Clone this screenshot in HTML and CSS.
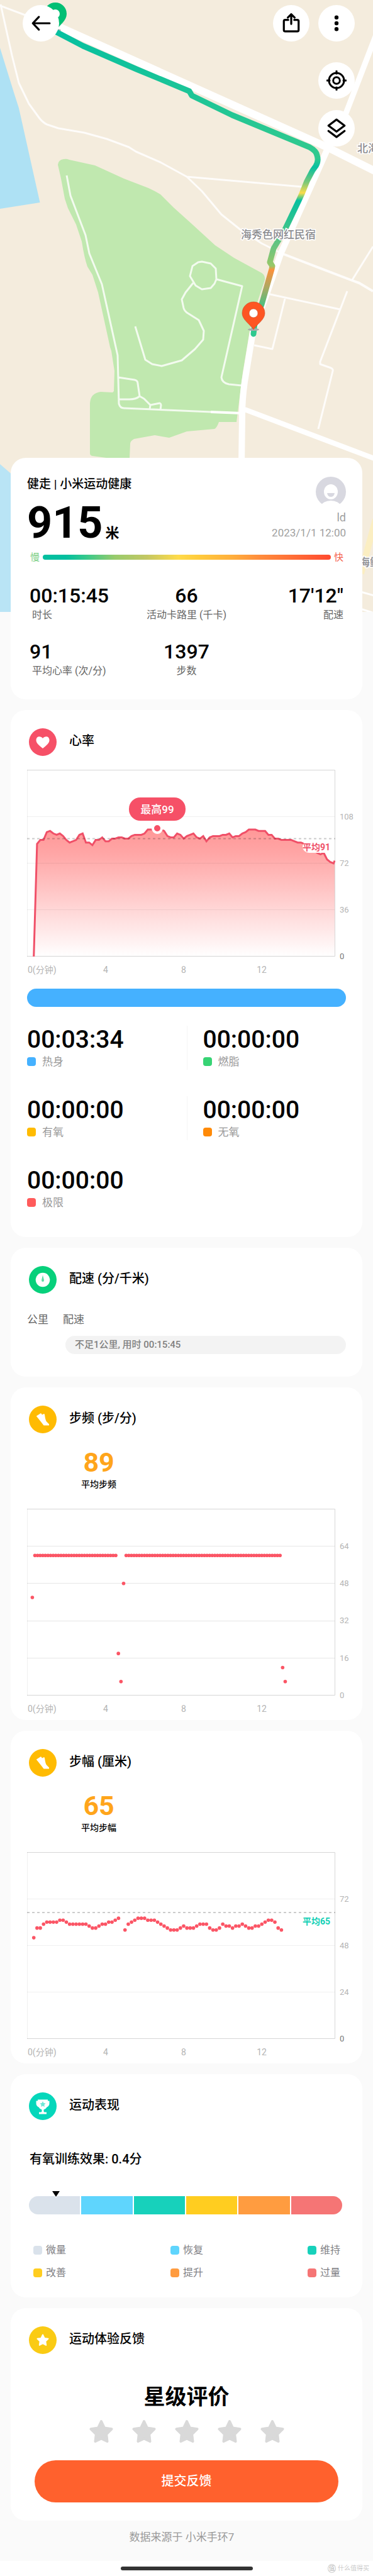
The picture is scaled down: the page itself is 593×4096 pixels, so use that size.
FILE: index.html
```html
<!DOCTYPE html>
<html lang="zh-CN">
<head>
  <meta charset="UTF-8">
  <meta name="viewport" content="width=device-width, initial-scale=1.0">
  <title>健走 | 小米运动健康</title>
  <link rel="stylesheet" href="styles.css">
</head>
<body>
  <svg class="map" viewBox="0 0 593 973" preserveAspectRatio="xMidYMin slice" aria-hidden="true">
    <defs>
      <linearGradient id="pace" gradientUnits="userSpaceOnUse" x1="0" y1="50" x2="0" y2="530">
        <stop offset="0" stop-color="#06c0a0"/>
        <stop offset=".38" stop-color="#2fc98f"/>
        <stop offset=".42" stop-color="#2fc98f"/>
        <stop offset=".45" stop-color="#06c0a0"/>
        <stop offset=".5" stop-color="#7cc878"/>
        <stop offset=".535" stop-color="#fbdc4a"/>
        <stop offset=".56" stop-color="#06c0a0"/>
        <stop offset=".64" stop-color="#35c38c"/>
        <stop offset=".72" stop-color="#70c47c"/>
        <stop offset=".777" stop-color="#98c868"/>
        <stop offset=".79" stop-color="#fb913c"/>
        <stop offset=".845" stop-color="#b0a860"/>
        <stop offset=".9" stop-color="#58bd7c"/>
        <stop offset="1" stop-color="#2fc98f"/>
      </linearGradient>
    </defs>
    <rect width="593" height="973" fill="#f4ecdd"/>
    <!-- water -->
    <path fill="#aee1f4" d="M0 76 22 147 30 172 63.500 322 0 332z"/>
    <path fill="#b9e4f5" d="M0 738 60 790V973H0z"/>
    <!-- park -->
    <path fill="#c0e8af" d="M92 262Q93 254 101 253Q106 252 110 254L151 263 197 284 236 299Q247 304 255 309L276 330 306 357 342 390 372 410 416 434Q422 438 421 445L408 484 397 526 386 592 376 671 348 671Q345 680 341 682L297 686 269 696 246 692 213 698Q207 701 207 706L206 728H169L147 725Q143 724 143 721L143 641Q144 625 160 623L179 624 181 622 182 590 177 558 175 552 156 465 147 437 139 424Q134 410 130 384L121 357 108 331 103 316 97 284z"/>
    <!-- roads -->
    <g fill="none" stroke="#fff" stroke-linejoin="round">
      <path stroke-width="12" d="M88 40 520 234 598 273"/>
      <path stroke-width="9" d="M600 50 550 180 522 236"/>
      <path stroke-width="10" d="M521 236 467 357 446 404 424 467 402 528 389 607Q385 635 385 660L384 740"/>
      <path stroke-width="8" d="M389 651 600 731"/>
      <path stroke-width="3" opacity=".85" d="M0 9 40 24M1 7 19 88 30 132 46 165 62 187Q68 195 75 198L93 204 134 211 170 221 205 234 216 241 255 258 297 281 321 304 352 341 382 365 416 387 444 401M297 281 480 297M593 392 560 445M425 467 541 492M552 463 509 575 509 579 526 585Q530 587 529 590L506 682M453 475 433 555 404 549"/>
      <path stroke-width="4" opacity=".85" d="M448 403 560 446 571 450 593 463"/>
      <path stroke-width="3" opacity=".8" d="M106 279 112 311 136 374 142 403 162 452 187 565 189 642Q191 649 197 649L335 655M188 600 214 604Q219 605 219 610L222 630Q216 635 206 635H189M222 630 229 634 239 644 238 651M239 644 254 641Q256 642 256 644L255 652M215 519 231 572 242 579 257 582 289 573 310 555 323 540 324 526 316 509 297 497Q293 494 292 490L289 476 295 465 307 450M321 416 335 419 343 427 344 444 341 451 335 458 321 460 311 454 302 439 306 423 315 417zM344 444 385 455 352 600Q353 609 364 611L384 613"/>
      <path stroke-width="4" d="M335 655 384 657"/>
      <path stroke-width="3" d="M570 940 595 947M570 967 595 975"/>
      <path stroke="#fbeec2" stroke-width="10" d="M597 826 574 912"/>
    </g>
    <!-- start marker -->
    <path fill="#02bf74" d="M88 50C80 38 70 33 70 22A18 18 0 0 1 106 22C106 33 96 38 88 50z"/>
    <ellipse cx="90" cy="48" rx="7" ry="2" fill="#b8b8b8"/>
    <circle cx="88" cy="22" r="7" fill="#fff"/>
    <!-- route -->
    <path fill="none" stroke="url(#pace)" stroke-width="9" stroke-linecap="round" stroke-linejoin="round" d="M88 50 132 73 217 110 301 145 305 152 369 183 492 234Q503 240 504 247 507 256 502 264L497 271 488 288 480 308 475 319 453 365 435 395 429 417 433 423 432 428 416 484 405 514 403 531"/>
    <!-- finish marker -->
    <ellipse cx="403" cy="524" rx="9" ry="2" fill="#aaa"/>
    <path fill="#fd5523" stroke="#c94a25" stroke-width=".6" d="M403 524C396 514 385 508 385 498A18 18 0 0 1 421 498C421 508 410 514 403 524z"/>
    <circle cx="403" cy="498" r="7" fill="#fff" stroke="#c94a25" stroke-width=".6"/>
    <g class="place">
      <text x="383" y="379">海秀色网红民宿</text>
      <text x="568" y="242">北海</text>
      <text x="571" y="900">海鲜</text>
    </g>
  </svg>

  <header class="controls">
    <div class="bar">
      <button class="round" aria-label="返回">
        <svg viewBox="0 0 30 30"><path d="M28 15H4M12 5.500 3 15l9 9.500"/></svg>
      </button>
      <div class="actions">
        <button class="round" aria-label="分享">
          <svg viewBox="0 0 30 30"><path d="M10.500 10H6q-2 0-2 2v13q0 2 2 2h18q2 0 2-2V12q0-2-2-2h-4.500M15 16V2M10 6.500 15 1.500l5 5"/></svg>
        </button>
        <button class="round" aria-label="更多">
          <svg viewBox="0 0 30 30"><g fill="#000" stroke="none"><circle cx="15" cy="6.300" r="3"/><circle cx="15" cy="15" r="3"/><circle cx="15" cy="23.700" r="3"/></g></svg>
        </button>
      </div>
    </div>
    <button class="round" aria-label="定位">
      <svg viewBox="-1 -1 32 32"><circle cx="15" cy="15" r="12"/><circle cx="15" cy="15" r="5.300"/><path d="M15 0v4M15 26v4M0 15h4M26 15h4"/></svg>
    </button>
    <button class="round" aria-label="图层">
      <svg viewBox="0 0 30 30"><path d="M15 2 27 11 15 20 3 11zM3 19l12 9 12-9"/></svg>
    </button>
  </header>

  <main class="cards">
    <section class="card summary">
      <div class="top">
        <div>
          <h1>健走 | 小米运动健康</h1>
          <p class="distance">915<small>米</small></p>
        </div>
        <div class="user">
          <svg class="avatar" viewBox="0 0 48 48" aria-hidden="true">
            <circle cx="24" cy="24" r="24" fill="#d8d8e0"/>
            <ellipse cx="24" cy="24" rx="11" ry="12" fill="#fff"/>
            <path fill="#d8d8e0" d="M18 26h12q-1 6-6 6t-6-6z"/>
            <path fill="#fff" d="M6 48q6-10 18-10t18 10z"/>
          </svg>
          <p>ld</p>
          <p class="date">2023/1/1 12:00</p>
        </div>
      </div>
      <div class="scale">
        <span class="slow">慢</span>
        <span class="gradient"></span>
        <span class="fast">快</span>
      </div>
      <dl class="stats">
        <div><dd>00:15:45</dd><dt>时长</dt></div>
        <div><dd>66</dd><dt>活动卡路里 (千卡)</dt></div>
        <div><dd>17'12"</dd><dt>配速</dt></div>
        <div><dd>91</dd><dt>平均心率 (次/分)</dt></div>
        <div><dd>1397</dd><dt>步数</dt></div>
      </dl>
    </section>

    <section class="card heart">
      <div class="head">
        <svg viewBox="0 0 44 44" aria-hidden="true"><circle cx="22" cy="22" r="22" fill="#f65067"/><path fill="#fff" d="M22 32C15 26.500 11.500 23 11.500 19c0-7 7.500-7 10.500-3 3-4 10.500-4 10.500 3 0 4-3.500 7.500-10.500 13z"/></svg>
        <h2>心率</h2>
      </div>
      <svg class="chart" viewBox="0 0 533 332" role="img" aria-label="心率曲线">
        <defs>
          <linearGradient id="heat" x1="0" y1="0" x2="0" y2="1">
            <stop offset="0" stop-color="#ff9797"/>
            <stop offset=".2" stop-color="#ffa6a6"/>
            <stop offset="1" stop-color="#fff"/>
          </linearGradient>
        </defs>
        <path id="heartArea" fill="url(#heat)"/>
        <path class="grid faint" d="M0 74.500H490M0 148.500H490M0 222.500H490"/>
        <path class="frame" d="M0 .5H489.500V296.500H0"/>
        <path class="edge" d="M.5 0V297"/>
        <path id="heartLine" class="line"/>
        <path class="average" d="M0 109.500H490"/>
        <rect x="438" y="112" width="49" height="20" rx="10" fill="#fff"/>
        <text class="mark red" x="482" y="128">平均91</text>
        <rect x="162" y="44" width="90" height="37" rx="18" fill="#f65067"/>
        <text class="tip" x="207" y="69">最高99</text>
        <circle cx="207" cy="93" r="7" fill="#f65067" stroke="#fff" stroke-width="4"/>
        <g class="ylabel">
          <text x="497" y="79">108</text><text x="497" y="153">72</text><text x="497" y="227">36</text><text class="zero" x="497" y="301">0</text>
        </g>
        <g class="xlabel">
          <text class="origin" x="1" y="323">0(分钟)</text><text x="125" y="323">4</text><text x="249" y="323">8</text><text x="373" y="323">12</text>
        </g>
      </svg>
      <div class="zonebar"></div>
      <ul class="zones">
        <li><strong>00:03:34</strong><span><i class="dot blue"></i>热身</span></li>
        <li><strong>00:00:00</strong><span><i class="dot green"></i>燃脂</span></li>
        <li><strong>00:00:00</strong><span><i class="dot amber"></i>有氧</span></li>
        <li><strong>00:00:00</strong><span><i class="dot orange"></i>无氧</span></li>
        <li><strong>00:00:00</strong><span><i class="dot coral"></i>极限</span></li>
      </ul>
    </section>

    <section class="card pace">
      <div class="head">
        <svg viewBox="0 0 44 44" aria-hidden="true"><circle cx="22" cy="22" r="22" fill="#07d07b"/><circle cx="22" cy="22" r="11.300" fill="#fff"/><path fill="#5cdca5" d="M22 14.500 24 22.500Q24 25 22 25T20 22.500z"/></svg>
        <h2>配速 (分/千米)</h2>
      </div>
      <table>
        <thead><tr><th>公里</th><th>配速</th></tr></thead>
        <tbody><tr><td></td><td><div class="pill">不足1公里, 用时 00:15:45</div></td></tr></tbody>
      </table>
    </section>

    <section class="card">
      <div class="head">
        <svg viewBox="0 0 44 44" aria-hidden="true"><circle cx="22" cy="22" r="22" fill="#ffbb02"/><path fill="#fff" d="M12 16.500 19 12l2 2.500 3-1.500 1 1q1 9 3 11.500l4 4v2H23.500Q21 28 12 17z"/></svg>
        <h2>步频 (步/分)</h2>
      </div>
      <div class="mean"><strong>89</strong><span>平均步频</span></div>
      <svg class="chart" viewBox="0 0 533 332" role="img" aria-label="步频图">
        <path class="grid" d="M0 59.500H490M0 118.500H490M0 178.500H490M0 237.500H490"/>
        <path class="frame" d="M0 .5H489.500V296.500H0"/>
        <path class="edge" d="M.5 0V297"/>
        <g id="cadence" class="points"></g>
        <g class="ylabel">
          <text x="497" y="64">64</text><text x="497" y="123">48</text><text x="497" y="182">32</text><text x="497" y="242">16</text><text x="497" y="301">0</text>
        </g>
        <g class="xlabel">
          <text class="origin" x="1" y="323">0(分钟)</text><text x="125" y="323">4</text><text x="249" y="323">8</text><text x="373" y="323">12</text>
        </g>
      </svg>
    </section>

    <section class="card">
      <div class="head">
        <svg viewBox="0 0 44 44" aria-hidden="true"><circle cx="22" cy="22" r="22" fill="#ffbb02"/><path fill="#fff" d="M12 16.500 19 12l2 2.500 3-1.500 1 1q1 9 3 11.500l4 4v2H23.500Q21 28 12 17z"/></svg>
        <h2>步幅 (厘米)</h2>
      </div>
      <div class="mean"><strong>65</strong><span>平均步幅</span></div>
      <svg class="chart" viewBox="0 0 533 332" role="img" aria-label="步幅图">
        <path class="grid faint" d="M0 74.500H490M0 148.500H490M0 222.500H490"/>
        <path class="frame" d="M0 .5H489.500V296.500H0"/>
        <path class="edge" d="M.5 0V297"/>
        <path class="average" d="M0 96H490"/>
        <g id="stride" class="points"></g>
        <text class="mark teal" x="482" y="115">平均65</text>
        <g class="ylabel">
          <text x="497" y="79">72</text><text x="497" y="153">48</text><text x="497" y="227">24</text><text class="zero" x="497" y="301">0</text>
        </g>
        <g class="xlabel">
          <text class="origin" x="1" y="323">0(分钟)</text><text x="125" y="323">4</text><text x="249" y="323">8</text><text x="373" y="323">12</text>
        </g>
      </svg>
    </section>

    <section class="card effect">
      <div class="head">
        <svg viewBox="0 0 44 44" aria-hidden="true"><circle cx="22" cy="22" r="22" fill="#05d7bb"/><path fill="#fff" d="M14 11.500h16v2h2.500v4q0 4-4 6Q26.500 27 23.500 27.500V30q0 1.500 2 1.500h2.500v3H16v-3h2.500q2 0 2-1.500v-2.500Q17.500 27 15.500 23.500q-4-2-4-6v-4H14z"/><path fill="#6fe7d6" d="m22 14 1.400 3 3.200.4-2.300 2.300.6 3.300-2.900-1.600-2.900 1.600.6-3.300-2.300-2.300 3.200-.4z"/></svg>
        <h2>运动表现</h2>
      </div>
      <h3>有氧训练效果: 0.4分</h3>
      <div class="levels">
        <span class="grey"></span><span class="sky"></span><span class="mint"></span><span class="yellow"></span><span class="peach"></span><span class="rose"></span>
        <svg class="pointer" viewBox="0 0 16 12" aria-hidden="true"><path fill="#000" stroke="#fff" stroke-width="2" paint-order="stroke" d="M2 1h12L8 10z"/></svg>
      </div>
      <ul class="legend">
        <li><i class="dot grey"></i>微量</li>
        <li><i class="dot sky"></i>恢复</li>
        <li><i class="dot mint"></i>维持</li>
        <li><i class="dot yellow"></i>改善</li>
        <li><i class="dot peach"></i>提升</li>
        <li><i class="dot rose"></i>过量</li>
      </ul>
    </section>

    <section class="card feedback">
      <div class="head">
        <svg viewBox="0 0 44 44" aria-hidden="true"><circle cx="22" cy="22" r="22" fill="#facb14"/><path fill="#fff" stroke="#fff" stroke-linejoin="round" stroke-width="2" d="m22 13.500 2.700 5.400 5.800.8-4.200 4.200.9 6-5.200-2.800-5.200 2.800.9-6-4.200-4.200 5.800-.8z"/></svg>
        <h2>运动体验反馈</h2>
      </div>
      <h3>星级评价</h3>
      <div class="stars">
        <button aria-label="1星"><svg viewBox="0 0 38 38"><path d="m19 3 5 10.500 11.500 1.800-8.300 8.400L28.500 35 19 30.500 9.500 35l1.300-11.300-8.300-8.400L14 13.500z"/></svg></button>
        <button aria-label="2星"><svg viewBox="0 0 38 38"><path d="m19 3 5 10.500 11.500 1.800-8.300 8.400L28.500 35 19 30.500 9.500 35l1.300-11.300-8.300-8.400L14 13.500z"/></svg></button>
        <button aria-label="3星"><svg viewBox="0 0 38 38"><path d="m19 3 5 10.500 11.500 1.800-8.300 8.400L28.500 35 19 30.500 9.500 35l1.300-11.300-8.300-8.400L14 13.500z"/></svg></button>
        <button aria-label="4星"><svg viewBox="0 0 38 38"><path d="m19 3 5 10.500 11.500 1.800-8.300 8.400L28.500 35 19 30.500 9.500 35l1.300-11.300-8.300-8.400L14 13.500z"/></svg></button>
        <button aria-label="5星"><svg viewBox="0 0 38 38"><path d="m19 3 5 10.500 11.500 1.800-8.300 8.400L28.500 35 19 30.500 9.500 35l1.300-11.300-8.300-8.400L14 13.500z"/></svg></button>
      </div>
      <button class="submit">提交反馈</button>
    </section>
  </main>

  <p class="source">数据来源于 小米手环7</p>
  <footer class="bottom">
    <span class="homebar"></span>
    <span class="watermark"><b>值</b>什么值得买</span>
  </footer>

  <script>
    const STEP = 5.18; // 每10秒的横向距离
    const BASE = 297;

    const heart = [0, 87, 90, 90, 96, 97, 95, 94, 95, 93, 90, 88, 89, 90, 94, 95, 88, 88, 86, 90, 90, 92, 89, 89,
      91, 91, 92, 92, 91, 91, 93, 94, 94, 94, 95, 98, 98, 98, 99, 98, 97, 93, 92, 92, 95, 94, 91, 93, 94, 95, 92,
      91, 93, 89, 92, 93, 93, 93, 94, 94, 95, 92, 93, 93, 95, 96, 98, 98, 98, 97, 97, 97, 94, 94, 91, 91, 90, 90,
      90, 90, 89, 88, 88, 87, 86, 84, 82, 80, 79, 80, 75, 73, 72];

    const stride = [52, 57, 57, 59, 60, 60, 60, 60, 61, 61, 60, 59, 59, 59, 59, 59, 59, 58, 57, 57, 58, 59, 59,
      60, 60, 61, 62, null, 56, 59, 60, 61, 62, 62, 62, 61, 61, 61, 60, 59, 58, 57, 56, 56, 56, 57, 58, 57, 57,
      57, 58, 59, 59, 59, 57, 56, 56, 57, 59, 58, 58, 57, 58, 58, 59, 58, 57, 57, 58, 58, 59, 60, 61, 61, 60, 57, 56];

    function addDot(group, x, y) {
      const dot = document.createElementNS('http://www.w3.org/2000/svg', 'circle');
      dot.setAttribute('cx', x);
      dot.setAttribute('cy', y);
      dot.setAttribute('r', 2.8);
      group.appendChild(dot);
    }

    function drawHeart() {
      const points = heart.map((v, i) => (10.7 + i * STEP).toFixed(1) + ' ' + (BASE - v * 2.06).toFixed(1));
      points.push('489 144.500');
      const line = 'M' + points.join('L');
      document.getElementById('heartLine').setAttribute('d', line);
      document.getElementById('heartArea').setAttribute('d', line + 'V297H10.700z');
    }

    function drawStride() {
      const group = document.getElementById('stride');
      stride.forEach((v, i) => {
        if (v !== null) addDot(group, 10.7 + i * STEP, BASE - v * 3.094);
      });
    }

    function drawCadence() {
      const group = document.getElementById('cadence');
      const special = { 0: 42, 33: 18, 34: 6, 35: 48, 96: 12, 97: 6 };
      for (let i = 0; i < 98; i++) {
        const v = i in special ? special[i] : 60;
        addDot(group, 8.4 + i * 4.145, BASE - v * 3.713);
      }
    }

    drawHeart();
    drawStride();
    drawCadence();
  </script>
</body>
</html>
```
FILE: styles.css
```css
* {
  box-sizing: border-box;
  margin: 0;
  padding: 0;
}

body {
  position: relative;
  background-color: #fafafa;
  color: #000;
  font-family: Roboto, "Noto Sans CJK SC", sans-serif;
  overflow-x: hidden;
}

ul {
  list-style: none;
}

button {
  border: none;
  background: none;
  font-family: inherit;
  cursor: pointer;
}

/* 地图 */
.map {
  position: absolute;
  top: 0;
  left: 0;
  width: 100%;
  height: 973px;
  z-index: -1;
}

.place {
  font-size: 17px;
  font-weight: 500;
  fill: #8c8c90;
  stroke: #fff;
  stroke-width: 3px;
  paint-order: stroke;
}

.controls {
  display: flex;
  flex-direction: column;
  align-items: flex-end;
  height: 728px;
  padding: 8px 29px 0 36px;
}

.bar {
  display: flex;
  justify-content: space-between;
  width: 100%;
  margin-bottom: 33px;
}

.actions {
  display: flex;
  gap: 14px;
}

.round {
  display: flex;
  justify-content: center;
  align-items: center;
  width: 58px;
  height: 58px;
  margin-bottom: 18px;
  border-radius: 50%;
  background-color: #fff;
}

.bar .round {
  margin-bottom: 0;
}

.round svg {
  width: 32px;
  height: 32px;
  fill: none;
  stroke: #000;
  stroke-width: 3;
  stroke-linecap: round;
  stroke-linejoin: round;
}

/* 卡片 */
.cards {
  display: flex;
  flex-direction: column;
  gap: 17px;
  padding: 0 17px;
}

.card {
  padding: 29px 26px 4px;
  border-radius: 24px;
  background-color: #fff;
}

.head {
  display: flex;
  align-items: center;
  gap: 20px;
  padding-left: 3px;
}

.head svg {
  width: 44px;
  height: 44px;
}

.head h2 {
  padding-bottom: 4px;
  font-size: 20px;
  font-weight: 500;
  line-height: 28px;
}

.dot {
  width: 14px;
  height: 14px;
  border-radius: 4px;
}

/* 概要 */
.summary {
  padding-bottom: 34px;
}

.top {
  display: flex;
  justify-content: space-between;
}

h1 {
  margin-top: 1px;
  font-size: 19px;
  font-weight: 500;
  line-height: 24px;
}

.distance {
  height: 80px;
  margin-top: 9px;
  font-size: 70px;
  font-weight: 700;
  line-height: 80px;
}

.distance small {
  margin-left: 4px;
  font-size: 22px;
  line-height: 1;
}

.user {
  color: #a0a0a0;
  font-size: 18px;
  line-height: 24px;
  text-align: right;
}

.avatar {
  display: block;
  width: 48px;
  height: 48px;
  margin: 1px 0 5px auto;
}

.user .date {
  font-size: 17px;
}

.scale {
  display: flex;
  align-items: center;
  gap: 5px;
  padding: 4px 4px 0 5px;
  font-size: 15px;
  line-height: 22px;
}

.slow {
  color: #7ccf85;
}

.fast {
  color: #f4604a;
}

.gradient {
  flex: 1;
  height: 8px;
  border-radius: 4px;
  background: linear-gradient(to right, #03bf9f 8%, #35c98c 15%, #98cb6c 25%, #c3c763 36%, #ffdb4a 47%, #ffcb3c 54%, #ffae3c 66%, #ff8d3c 75%, #ff4a30);
}

.stats {
  display: grid;
  grid-template-columns: 1fr 1fr 1fr;
  row-gap: 27px;
  margin-top: 30px;
  padding: 0 4px;
}

.stats > div {
  display: flex;
  flex-direction: column;
  align-items: center;
}

.stats > div:nth-child(3n + 1) {
  align-items: flex-start;
}

.stats > div:nth-child(3n) {
  align-items: flex-end;
}

.stats dd {
  font-size: 32px;
  font-weight: 500;
  line-height: 40px;
}

.stats dt {
  color: #666;
  font-size: 16px;
  line-height: 22px;
}

.stats > div:nth-child(3n + 1) dt {
  padding-left: 4px;
}

/* 图表 */
.chart {
  display: block;
  width: calc(100% + 26px);
}

.grid,
.frame,
.edge {
  fill: none;
  stroke: #e6e6e6;
}

.faint,
.edge {
  stroke: #000;
  stroke-opacity: 0.06;
}

.frame {
  stroke: #d6d6d6;
}

.line {
  fill: none;
  stroke: #f05068;
  stroke-width: 3;
}

.average {
  fill: none;
  stroke: #000;
  stroke-opacity: 0.2;
  stroke-width: 2;
  stroke-dasharray: 4;
}

.points {
  fill: #fb5565;
}

.ylabel,
.xlabel {
  fill: #b4b4b4;
  font-size: 13px;
}

.ylabel .zero {
  fill: #777;
}

.xlabel {
  font-size: 14px;
  text-anchor: middle;
}

.xlabel .origin {
  text-anchor: start;
}

.mark {
  font-size: 14px;
  font-weight: 700;
  text-anchor: end;
}

.red {
  fill: #ef5068;
}

.teal {
  fill: #12cfb5;
}

.tip {
  fill: #fff;
  font-size: 17px;
  font-weight: 500;
  text-anchor: middle;
}

/* 心率 */
.heart {
  padding-bottom: 42px;
}

.heart .chart {
  margin-top: 22px;
}

.zonebar {
  height: 29px;
  margin-top: 16px;
  border-radius: 15px;
  background-color: #45b1ff;
}

.zones {
  display: grid;
  grid-template-columns: 1fr 1fr;
  row-gap: 42px;
  margin-top: 30px;
}

.zones li:nth-child(even) {
  padding-left: 25px;
  border-left: 1px solid #f5f5f5;
}

.zones strong {
  display: block;
  font-size: 39px;
  font-weight: 500;
  line-height: 44px;
}

.zones span {
  display: flex;
  align-items: center;
  gap: 10px;
  color: #999;
  font-size: 17px;
  line-height: 26px;
}

.blue { background-color: #45b1ff; }
.green { background-color: #37d374; }
.amber { background-color: #ffbb02; }
.orange { background-color: #ff8a08; }
.coral { background-color: #ff5b5b; }
.grey { background-color: #dae2eb; }
.sky { background-color: #5fd5fd; }
.mint { background-color: #17d1bb; }
.yellow { background-color: #ffcd20; }
.peach { background-color: #ff9c40; }
.rose { background-color: #f57575; }

/* 配速 */
.pace {
  padding-bottom: 36px;
}

.pace table {
  width: 100%;
  margin-top: 29px;
  border-collapse: collapse;
}

.pace th {
  color: #666;
  font-size: 17px;
  font-weight: 400;
  line-height: 24px;
  text-align: left;
}

.pace th:first-child {
  width: 57px;
}

.pill {
  margin: 14px 0 0 4px;
  padding-left: 15px;
  border-radius: 15px;
  background-color: #f3f3f3;
  color: #808080;
  font-size: 15px;
  font-weight: 500;
  line-height: 29px;
}

/* 平均值 */
.mean {
  display: flex;
  flex-direction: column;
  align-items: center;
  width: 45%;
  margin: 22px 0 28px;
}

.mean strong {
  color: #ffa51b;
  font-size: 43px;
  font-weight: 700;
  line-height: 48px;
}

.mean span {
  font-size: 14px;
  font-weight: 500;
  line-height: 22px;
}

/* 运动表现 */
.effect {
  padding-bottom: 28px;
}

.effect h3 {
  margin-top: 49px;
  padding-left: 4px;
  font-size: 20px;
  font-weight: 500;
  line-height: 26px;
}

.levels {
  position: relative;
  display: flex;
  gap: 2px;
  height: 29px;
  margin: 46px 6px 0 3px;
}

.levels span {
  flex: 1;
}

.levels span:first-child {
  border-radius: 15px 0 0 15px;
}

.levels .rose {
  border-radius: 0 15px 15px 0;
}

.pointer {
  position: absolute;
  top: -9px;
  left: 7%;
  width: 16px;
  height: 12px;
}

.legend {
  display: grid;
  grid-template-columns: repeat(3, auto);
  justify-content: space-between;
  row-gap: 14px;
  margin-top: 46px;
  padding: 0 9px 0 10px;
}

.legend li {
  display: flex;
  align-items: center;
  gap: 6px;
  color: #808084;
  font-size: 16px;
  line-height: 22px;
}

/* 反馈 */
.feedback {
  padding-bottom: 29px;
}

.feedback h3 {
  margin-top: 46px;
  font-size: 34px;
  font-weight: 700;
  line-height: 44px;
  text-align: center;
}

.stars {
  display: flex;
  justify-content: center;
  gap: 30px;
  margin-top: 14px;
}

.stars svg {
  display: block;
  width: 38px;
  height: 38px;
  fill: #d9d9d9;
  stroke: #d9d9d9;
  stroke-width: 4;
  stroke-linejoin: round;
}

.submit {
  display: block;
  width: calc(100% - 24px);
  margin: 27px auto 0;
  border-radius: 34px;
  background-color: #ff612d;
  color: #fff;
  font-size: 20px;
  font-weight: 500;
  line-height: 67px;
}

/* 页脚 */
.source {
  margin: 14px 15px 26px 0;
  color: #999;
  font-size: 17px;
  line-height: 24px;
  text-align: center;
}

.bottom {
  position: relative;
  display: flex;
  justify-content: center;
  align-items: center;
  height: 24px;
  background-color: #fff;
}

.homebar {
  width: 210px;
  height: 6px;
  border-radius: 3px;
  background-color: #333;
}

.watermark {
  position: absolute;
  right: 6px;
  display: flex;
  align-items: center;
  gap: 3px;
  color: #ccc;
  font-size: 10px;
  line-height: 12px;
}

.watermark b {
  padding: 0 1px;
  border: 1px solid #ccc;
  border-radius: 50%;
  font-size: 9px;
}
```
